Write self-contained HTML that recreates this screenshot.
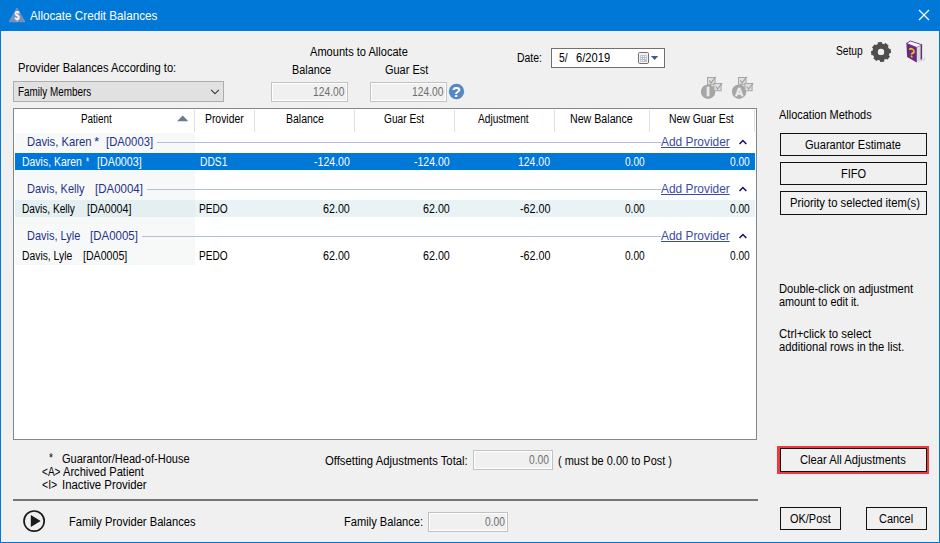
<!DOCTYPE html>
<html><head><meta charset="utf-8">
<style>
html,body{margin:0;padding:0}
body{width:940px;height:543px;overflow:hidden;background:#f0f0f0;font-family:"Liberation Sans",sans-serif;font-size:12px;color:#000;position:relative}
.abs{position:absolute}
.x{position:absolute;white-space:pre;line-height:20px;transform-origin:0 50%}
.inp{position:absolute;box-sizing:border-box;border:1px solid #c2c2c2;background:#f0f0f0;box-shadow:inset 0 0 0 1px #fff}
.btn{position:absolute;box-sizing:border-box;border:1px solid #111;background:#f0f0f0}
.sep{position:absolute;top:1px;width:1px;height:22px;background:#e0e0e0}
.gl{position:absolute;height:1px;background:#b4bce0}
</style></head><body>
<!-- window chrome -->
<div class="abs" style="left:0;top:0;width:940px;height:31px;background:#0078d7"></div>
<div class="abs" style="left:0;top:31px;width:1px;height:512px;background:#0078d7"></div>
<div class="abs" style="left:939px;top:31px;width:1px;height:512px;background:#0078d7"></div>
<div class="abs" style="left:0;top:542px;width:940px;height:1px;background:#0078d7"></div>
<svg class="abs" style="left:8px;top:7px" width="18" height="16" viewBox="0 0 18 16"><polygon points="9,1.5 16.5,14.5 1.5,14.5" fill="#7390ba" stroke="#7390ba" stroke-linejoin="round" stroke-width="1.5"/><text x="0" y="0" font-size="13" font-weight="bold" fill="#fff" text-anchor="middle" font-family="Liberation Sans, sans-serif" transform="translate(9.1,13.4) scale(0.72,1)">$</text></svg>
<svg class="abs" style="left:918px;top:9px" width="12" height="12" viewBox="0 0 12 12"><path d="M1 1L11 11M11 1L1 11" stroke="#fff" stroke-width="1.2" fill="none"/></svg>

<!-- combo -->
<div class="abs" style="left:13px;top:81px;width:211px;height:21px;box-sizing:border-box;border:1px solid #adadad;background:#e1e1e1"></div>
<svg class="abs" style="left:209px;top:87px" width="12" height="9" viewBox="0 0 12 9"><path d="M2.1 2.9L6 6.7L9.9 2.9" stroke="#404040" stroke-width="1.15" fill="none"/></svg>
<div class="inp" style="left:271px;top:82px;width:77px;height:20px"></div>
<div class="inp" style="left:370px;top:82px;width:77px;height:20px"></div>
<svg class="abs" style="left:448px;top:83px" width="18" height="18" viewBox="0 0 18 18"><circle cx="8.5" cy="8.55" r="7.7" fill="#5588c5"/><text x="8.35" y="14" font-size="15" font-weight="bold" fill="#fff" text-anchor="middle" font-family="Liberation Sans, sans-serif">?</text></svg>

<!-- date -->
<div class="abs" style="left:551px;top:48px;width:114px;height:20px;box-sizing:border-box;border:1px solid #707070;background:#fff"></div>
<svg class="abs" style="left:637px;top:51px" width="24" height="14" viewBox="0 0 24 14"><rect x="1.5" y="1.5" width="10" height="11" rx="1.2" fill="#eef2fa" stroke="#7b6d6b"/><rect x="3.2" y="4.2" width="6.6" height="6.6" fill="#b4bac6"/><g fill="#fff"><rect x="4" y="5" width="1.1" height="1.1"/><rect x="6" y="5" width="1.1" height="1.1"/><rect x="8" y="5" width="1.1" height="1.1"/><rect x="4" y="7" width="1.1" height="1.1"/><rect x="6" y="7" width="1.1" height="1.1"/><rect x="8" y="7" width="1.1" height="1.1"/><rect x="4" y="9" width="1.1" height="1.1"/><rect x="6" y="9" width="1.1" height="1.1"/></g><polygon points="14,5 21.2,5 17.6,9" fill="#3d5a8a"/></svg>

<!-- setup gear -->
<svg class="abs" style="left:869px;top:40px" width="24" height="24" viewBox="0 0 24 24"><g fill="#4e4f51" transform="rotate(-7 12 12)"><circle cx="12" cy="12" r="8.6"/><rect x="9.8" y="2.1" width="4.4" height="19.8" rx="0.6"/><rect x="9.8" y="2.1" width="4.4" height="19.8" rx="0.6" transform="rotate(45 12 12)"/><rect x="9.8" y="2.1" width="4.4" height="19.8" rx="0.6" transform="rotate(90 12 12)"/><rect x="9.8" y="2.1" width="4.4" height="19.8" rx="0.6" transform="rotate(135 12 12)"/></g><circle cx="12" cy="11.9" r="3.2" fill="#f0f0f0"/></svg>
<!-- book -->
<svg class="abs" style="left:900px;top:36px" width="32" height="32" viewBox="0 0 32 32"><polygon points="17,26.5 22.5,23 26,21 24,25" fill="#dcdcdc"/><polygon points="6.4,7.4 10.3,5 22.1,8.8 16.8,11.5" fill="#fff" stroke="#6a2a80" stroke-width="0.9" stroke-linejoin="round"/><polygon points="16.8,11.5 22.1,8.8 22.1,23 16.8,26.5" fill="#d6ddd8"/><polygon points="20.6,9.6 22.1,8.8 22.1,23 20.6,24" fill="#6a2a80"/><polygon points="6.4,7.4 16.8,11.5 16.8,26.5 7.1,20.9" fill="#6a2a80"/><text x="0" y="0" font-size="13.5" font-weight="bold" fill="#f0c21a" text-anchor="middle" font-family="Liberation Sans, sans-serif" transform="translate(11.7,21.3) skewY(22) scale(0.85,1)">?</text></svg>

<!-- disabled icons -->
<svg class="abs" style="left:694px;top:70px" width="68" height="34" viewBox="0 0 68 34"><g id="dic"><circle cx="14.1" cy="21.7" r="7.2" fill="#a6a6a6"/><rect x="13.5" y="7.5" width="7.5" height="6.8" fill="#e0e0e0" stroke="#a6a6a6"/><rect x="19.9" y="13.5" width="7.2" height="7.2" fill="#e0e0e0" stroke="#a6a6a6"/><path d="M15.3 10.3l1.8 2.6l4.6-6M21.8 16.5l1.8 2.6l4.6-6" stroke="#a2a2a2" stroke-width="1.2" fill="none"/></g><use href="#dic" x="31"/><text x="14.1" y="26.2" font-size="12.5" font-weight="bold" fill="#ededed" stroke="#ededed" stroke-width="0.6" text-anchor="middle" font-family="Liberation Sans, sans-serif">I</text><text x="45.1" y="26" font-size="11.5" font-weight="bold" fill="#ededed" stroke="#ededed" stroke-width="0.4" text-anchor="middle" font-family="Liberation Sans, sans-serif">A</text></svg>

<!-- grid -->
<div class="abs" style="left:13px;top:108px;width:744px;height:332px;box-sizing:border-box;border:1px solid #828790;background:#fff;overflow:hidden">
 <div class="abs" style="left:1px;top:24px;width:180px;height:132px;background:#f7f9f9"></div>
 <div class="abs" style="left:1px;top:91px;width:740px;height:17px;background:rgba(200,226,232,.40)"></div>
 <div class="abs" style="left:1px;top:44px;width:740px;height:17px;background:#0078d7"></div>
 <div class="sep" style="left:180px"></div><div class="sep" style="left:240px"></div><div class="sep" style="left:340px"></div><div class="sep" style="left:440px"></div><div class="sep" style="left:540px"></div><div class="sep" style="left:635px"></div><div class="sep" style="left:740px"></div>
 <svg class="abs" style="left:163px;top:6px" width="12" height="7" viewBox="0 0 12 7"><polygon points="5.7,0.6 11.3,6.2 0.1,6.2" fill="#6b7b8f"/></svg>
 <div class="gl" style="left:143px;top:33px;width:504px"></div>
 <div class="gl" style="left:133px;top:80px;width:514px"></div>
 <div class="gl" style="left:128px;top:127px;width:519px"></div>
 <svg class="abs" style="left:723.6px;top:28.7px" width="10" height="8" viewBox="0 0 10 8"><path d="M1.5 6L4.9 2.5L8.3 6" stroke="#101070" stroke-width="1.55" fill="none"/></svg>
 <svg class="abs" style="left:723.6px;top:75.7px" width="10" height="8" viewBox="0 0 10 8"><path d="M1.5 6L4.9 2.5L8.3 6" stroke="#101070" stroke-width="1.55" fill="none"/></svg>
 <svg class="abs" style="left:723.6px;top:122.7px" width="10" height="8" viewBox="0 0 10 8"><path d="M1.5 6L4.9 2.5L8.3 6" stroke="#101070" stroke-width="1.55" fill="none"/></svg>
</div>

<!-- right buttons -->
<div class="btn" style="left:780px;top:133px;width:147px;height:23px"></div>
<div class="btn" style="left:780px;top:162px;width:147px;height:23px"></div>
<div class="btn" style="left:780px;top:191px;width:147px;height:24px"></div>
<div class="abs" style="left:777px;top:446px;width:152px;height:28px;box-sizing:border-box;border:2px solid #ee3a3e;border-left-width:3px"></div>
<div class="btn" style="left:780px;top:448px;width:147px;height:24px"></div>
<div class="btn" style="left:780px;top:507px;width:61px;height:23px"></div>
<div class="btn" style="left:866px;top:507px;width:61px;height:23px"></div>

<!-- bottom -->
<div class="inp" style="left:473px;top:450px;width:80px;height:20px"></div>
<div class="abs" style="left:13px;top:499px;width:745px;height:2px;background:#757575"></div>
<svg class="abs" style="left:22px;top:509px" width="24" height="24" viewBox="0 0 24 24"><circle cx="12.1" cy="12.1" r="10.1" fill="none" stroke="#1a1a1a" stroke-width="1.7"/><polygon points="8.8,6.1 18.7,12.1 8.8,18.1" fill="#1a1a1a"/></svg>
<div class="inp" style="left:428px;top:512px;width:80px;height:20px"></div>

<span class="x" style="left:29.80px;top:6px;font-size:12.6px;color:#fff;transform:scaleX(0.9285);">Allocate Credit Balances</span>
<span class="x" style="left:17.70px;top:58px;font-size:12px;color:#000;transform:scaleX(0.9300);">Provider Balances According to:</span>
<span class="x" style="left:309.80px;top:42px;font-size:12px;color:#000;transform:scaleX(0.9221);">Amounts to Allocate</span>
<span class="x" style="left:291.60px;top:60px;font-size:12px;color:#000;transform:scaleX(0.9012);">Balance</span>
<span class="x" style="left:385.20px;top:60px;font-size:12px;color:#000;transform:scaleX(0.9125);">Guar Est</span>
<span class="x" style="left:17.70px;top:82px;font-size:12px;color:#000;transform:scaleX(0.8247);">Family Members</span>
<span class="x" style="left:312.50px;top:82px;font-size:12px;color:#6d6d6d;transform:scaleX(0.8568);">124.00</span>
<span class="x" style="left:411.90px;top:82px;font-size:12px;color:#6d6d6d;transform:scaleX(0.8568);">124.00</span>
<span class="x" style="left:516.80px;top:48px;font-size:12px;color:#000;transform:scaleX(0.8714);">Date:</span>
<span class="x" style="left:559.20px;top:48px;font-size:12px;color:#000;transform:scaleX(0.8640);">5/</span>
<span class="x" style="left:576.00px;top:48px;font-size:12px;color:#000;transform:scaleX(0.9297);">6/2019</span>
<span class="x" style="left:836.30px;top:41px;font-size:12px;color:#000;transform:scaleX(0.8531);">Setup</span>
<span class="x" style="left:80.50px;top:109px;font-size:12px;color:#000;transform:scaleX(0.8237);">Patient</span>
<span class="x" style="left:205.20px;top:109px;font-size:12px;color:#000;transform:scaleX(0.8644);">Provider</span>
<span class="x" style="left:285.70px;top:109px;font-size:12px;color:#000;transform:scaleX(0.8744);">Balance</span>
<span class="x" style="left:383.70px;top:109px;font-size:12px;color:#000;transform:scaleX(0.8458);">Guar Est</span>
<span class="x" style="left:477.90px;top:109px;font-size:12px;color:#000;transform:scaleX(0.8443);">Adjustment</span>
<span class="x" style="left:570.20px;top:109px;font-size:12px;color:#000;transform:scaleX(0.8873);">New Balance</span>
<span class="x" style="left:669.40px;top:109px;font-size:12px;color:#000;transform:scaleX(0.8667);">New Guar Est</span>
<span class="x" style="left:27.29px;top:132px;font-size:13px;color:#1e3287;transform:scaleX(0.8685);">Davis, Karen</span>
<span class="x" style="left:94.20px;top:132px;font-size:13px;color:#1e3287;transform:scaleX(1.0400);">*</span>
<span class="x" style="left:105.50px;top:132px;font-size:13px;color:#1e3287;transform:scaleX(0.8685);">[DA0003]</span>
<span class="x" style="left:661.00px;top:132px;font-size:13px;color:#3b4ba3;transform:scaleX(0.9142);text-decoration:underline;">Add Provider</span>
<span class="x" style="left:27.29px;top:179px;font-size:13px;color:#1e3287;transform:scaleX(0.8461);">Davis, Kelly</span>
<span class="x" style="left:95.20px;top:179px;font-size:13px;color:#1e3287;transform:scaleX(0.8833);">[DA0004]</span>
<span class="x" style="left:661.00px;top:179px;font-size:13px;color:#3b4ba3;transform:scaleX(0.9142);text-decoration:underline;">Add Provider</span>
<span class="x" style="left:27.30px;top:226px;font-size:13px;color:#1e3287;transform:scaleX(0.8441);">Davis, Lyle</span>
<span class="x" style="left:90.40px;top:226px;font-size:13px;color:#1e3287;transform:scaleX(0.8833);">[DA0005]</span>
<span class="x" style="left:661.00px;top:226px;font-size:13px;color:#3b4ba3;transform:scaleX(0.9142);text-decoration:underline;">Add Provider</span>
<span class="x" style="left:22.20px;top:152px;font-size:12px;color:#fff;transform:scaleX(0.8710);">Davis, Karen</span>
<span class="x" style="left:85.80px;top:152px;font-size:12px;color:#fff;transform:scaleX(0.6400);">*</span>
<span class="x" style="left:97.00px;top:152px;font-size:12px;color:#fff;transform:scaleX(0.8940);">[DA0003]</span>
<span class="x" style="left:199.60px;top:152px;font-size:12px;color:#fff;transform:scaleX(0.8563);">DDS1</span>
<span class="x" style="left:314.20px;top:152px;font-size:12px;color:#fff;transform:scaleX(0.8805);">-124.00</span>
<span class="x" style="left:414.30px;top:152px;font-size:12px;color:#fff;transform:scaleX(0.8732);">-124.00</span>
<span class="x" style="left:517.80px;top:152px;font-size:12px;color:#fff;transform:scaleX(0.8703);">124.00</span>
<span class="x" style="left:624.50px;top:152px;font-size:12px;color:#fff;transform:scaleX(0.8417);">0.00</span>
<span class="x" style="left:729.60px;top:152px;font-size:12px;color:#fff;transform:scaleX(0.8458);">0.00</span>
<span class="x" style="left:22.20px;top:199px;font-size:12px;color:#000;transform:scaleX(0.8444);">Davis, Kelly</span>
<span class="x" style="left:86.60px;top:199px;font-size:12px;color:#000;transform:scaleX(0.8880);">[DA0004]</span>
<span class="x" style="left:199.20px;top:199px;font-size:12px;color:#000;transform:scaleX(0.8412);">PEDO</span>
<span class="x" style="left:323.20px;top:199px;font-size:12px;color:#000;transform:scaleX(0.8933);">62.00</span>
<span class="x" style="left:423.20px;top:199px;font-size:12px;color:#000;transform:scaleX(0.8933);">62.00</span>
<span class="x" style="left:519.50px;top:199px;font-size:12px;color:#000;transform:scaleX(0.8971);">-62.00</span>
<span class="x" style="left:624.50px;top:199px;font-size:12px;color:#000;transform:scaleX(0.8417);">0.00</span>
<span class="x" style="left:729.60px;top:199px;font-size:12px;color:#000;transform:scaleX(0.8458);">0.00</span>
<span class="x" style="left:22.20px;top:246px;font-size:12px;color:#000;transform:scaleX(0.8621);">Davis, Lyle</span>
<span class="x" style="left:83.40px;top:246px;font-size:12px;color:#000;transform:scaleX(0.8840);">[DA0005]</span>
<span class="x" style="left:199.20px;top:246px;font-size:12px;color:#000;transform:scaleX(0.8412);">PEDO</span>
<span class="x" style="left:323.20px;top:246px;font-size:12px;color:#000;transform:scaleX(0.8933);">62.00</span>
<span class="x" style="left:423.20px;top:246px;font-size:12px;color:#000;transform:scaleX(0.8933);">62.00</span>
<span class="x" style="left:519.50px;top:246px;font-size:12px;color:#000;transform:scaleX(0.8971);">-62.00</span>
<span class="x" style="left:624.50px;top:246px;font-size:12px;color:#000;transform:scaleX(0.8417);">0.00</span>
<span class="x" style="left:729.60px;top:246px;font-size:12px;color:#000;transform:scaleX(0.8458);">0.00</span>
<span class="x" style="left:779.00px;top:105px;font-size:12px;color:#000;transform:scaleX(0.9137);">Allocation Methods</span>
<span class="x" style="left:805.30px;top:135px;font-size:12px;color:#000;transform:scaleX(0.9212);">Guarantor Estimate</span>
<span class="x" style="left:841.40px;top:164px;font-size:12px;color:#000;transform:scaleX(0.9185);">FIFO</span>
<span class="x" style="left:789.50px;top:193px;font-size:12px;color:#000;transform:scaleX(0.9371);">Priority to selected item(s)</span>
<span class="x" style="left:779.20px;top:279px;font-size:12px;color:#000;transform:scaleX(0.9303);">Double-click on adjustment</span>
<span class="x" style="left:779.20px;top:292px;font-size:12px;color:#000;transform:scaleX(0.9062);">amount to edit it.</span>
<span class="x" style="left:779.20px;top:324px;font-size:12px;color:#000;transform:scaleX(0.9490);">Ctrl+click to select</span>
<span class="x" style="left:779.20px;top:337px;font-size:12px;color:#000;transform:scaleX(0.9343);">additional rows in the list.</span>
<span class="x" style="left:800.10px;top:450px;font-size:12px;color:#000;transform:scaleX(0.9333);">Clear All Adjustments</span>
<span class="x" style="left:790.00px;top:509px;font-size:12px;color:#000;transform:scaleX(0.9111);">OK/Post</span>
<span class="x" style="left:878.90px;top:509px;font-size:12px;color:#000;transform:scaleX(0.9122);">Cancel</span>
<span class="x" style="left:49.20px;top:448px;font-size:12px;color:#000;transform:scaleX(0.8400);">*</span>
<span class="x" style="left:62.30px;top:449px;font-size:12px;color:#000;transform:scaleX(0.9201);">Guarantor/Head-of-House</span>
<span class="x" style="left:41.50px;top:462px;font-size:12px;color:#000;transform:scaleX(0.8409);">&lt;A&gt;</span>
<span class="x" style="left:63.20px;top:462px;font-size:12px;color:#000;transform:scaleX(0.9250);">Archived Patient</span>
<span class="x" style="left:42.30px;top:475px;font-size:12px;color:#000;transform:scaleX(0.8765);">&lt;I&gt;</span>
<span class="x" style="left:62.36px;top:475px;font-size:12px;color:#000;transform:scaleX(0.9468);">Inactive Provider</span>
<span class="x" style="left:325.20px;top:451px;font-size:12px;color:#000;transform:scaleX(0.9411);">Offsetting Adjustments Total:</span>
<span class="x" style="left:529.30px;top:450px;font-size:12px;color:#6d6d6d;transform:scaleX(0.8542);">0.00</span>
<span class="x" style="left:558.30px;top:451px;font-size:12px;color:#000;transform:scaleX(0.9141);">( must be 0.00 to Post )</span>
<span class="x" style="left:68.50px;top:512px;font-size:12px;color:#000;transform:scaleX(0.9309);">Family Provider Balances</span>
<span class="x" style="left:343.80px;top:512px;font-size:12px;color:#000;transform:scaleX(0.9271);">Family Balance:</span>
<span class="x" style="left:484.50px;top:512px;font-size:12px;color:#6d6d6d;transform:scaleX(0.8500);">0.00</span>
</body></html>
